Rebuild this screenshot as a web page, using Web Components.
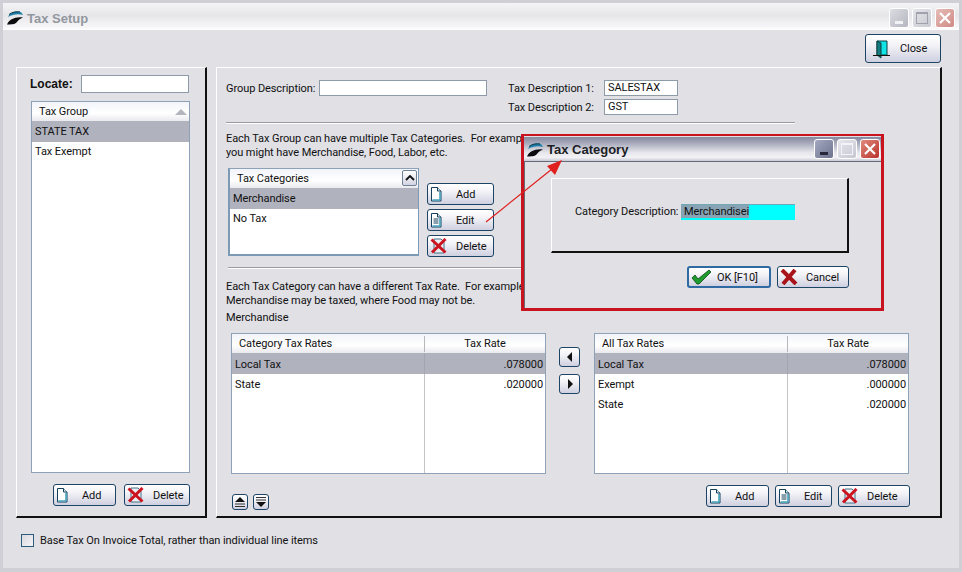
<!DOCTYPE html>
<html>
<head>
<meta charset="utf-8">
<title>Tax Setup</title>
<style>
  html, body { margin: 0; padding: 0; background: #e0e0e5; }
  body { font: 11px Roboto, "Liberation Sans", Arial, sans-serif; letter-spacing: -.08px; color: #111; }
</style>
</head>
<body>
<tax-setup-app></tax-setup-app>
<script>
// Small inline icons, keyed by name
const PAGE = `<path d="M1.500 1.500h6l3.500 3.500v10h-9.500z" fill="#fff" stroke="#14405c"/><path d="M7.500 1.500v3.500h3.500" fill="#d8eef4" stroke="#14405c"/><path d="M2.500 14h7.500M10 6v8" stroke="#45a3bd" stroke-width="1.600"/>`;
const ICONS = {
  add: `<svg width="13" height="16" viewBox="0 0 13 16">${PAGE}</svg>`,
  edit: `<svg width="13" height="16" viewBox="0 0 13 16">${PAGE}<path d="M3.500 7h5M3.500 9h5M3.500 11h5" stroke="#14405c"/></svg>`,
  del: `<svg width="18" height="16" viewBox="0 0 18 16"><path d="M4 1h7l3 3v11H4z" fill="#e8eef2" stroke="#49708a"/><path d="M1.500 1.500l14 13M15.500 1L2 14.500" stroke="#cc1420" stroke-width="3"/></svg>`,
  ok: `<svg width="22" height="16" viewBox="0 0 22 16"><path d="M1 9l3-3 3 4L18 1l2 2L8 15H6z" fill="#1f9a2e" stroke="#0a4a14" stroke-width=".8"/></svg>`,
  cancel: `<svg width="18" height="16" viewBox="0 0 18 16"><path d="M2 1l14 14M15 1L3 15" stroke="#a8141a" stroke-width="4"/></svg>`,
  door: `<svg width="20" height="20" viewBox="0 0 20 20"><path d="M5 2h10v14H5z" fill="#10e4e4" stroke="#0c3f44"/><path d="M5 2l4 2v15l-4-3z" fill="#157d80" stroke="#0c3f44"/><path d="M1 16.500h17" stroke="#111"/></svg>`,
  left: `<svg width="8" height="10" viewBox="0 0 8 10"><path d="M6 0v10L1 5z" fill="#111"/></svg>`,
  right: `<svg width="8" height="10" viewBox="0 0 8 10"><path d="M2 0v10l5-5z" fill="#111"/></svg>`,
  top: `<svg width="12" height="12" viewBox="0 0 12 12"><path d="M6 1l5 5H1z" fill="#111"/><path d="M1 8h10M1 10.500h10" stroke="#333"/></svg>`,
  bottom: `<svg width="12" height="12" viewBox="0 0 12 12"><path d="M1 1.500h10M1 4h10" stroke="#333"/><path d="M6 11l5-5H1z" fill="#111"/></svg>`
};

const LOGO = `<svg width="17" height="14" viewBox="0 0 17 14"><path d="M1 6C3 1 8 0 12 .5c2 .3 3 1.500 4 3.500C12 2.500 6 3 1 6z" fill="#1f7fa6"/><path d="M2 3.500C5 1 9 .5 13 1" fill="none" stroke="#0e3a50"/><path d="M0 13.500C2 8.500 8 5.500 16 6.500c-3 1-5 3-6 4.500-2 2.500-6 2.500-10 2.500z" fill="#0c0c10"/></svg>`;

class CaptionButtons extends HTMLElement {
  constructor() {
    super();
    this.attachShadow({ mode: 'open' });
    const active = this.hasAttribute('active');
    this.shadowRoot.innerHTML = `
      <style>
        :host { display: flex; gap: 3px; }
        span { width: 20px; height: 20px; box-sizing: border-box; border: 1px solid #fff; border-radius: 3px; display: flex; align-items: center; justify-content: center; }
        .min { background: ${active ? 'linear-gradient(135deg,#a4a8c0,#6d7290)' : 'linear-gradient(135deg,#dcdce2,#b4b5bf)'}; }
        .max { background: ${active ? 'linear-gradient(135deg,#e6e6ec,#c6c7d2)' : 'linear-gradient(135deg,#e4e4e9,#c9cad2)'}; }
        .close { background: ${active ? 'linear-gradient(135deg,#e08a7c,#b8332c)' : 'linear-gradient(135deg,#e6bdb8,#cf8a84)'}; }
        i { display: block; }
        .min i { width: 8px; height: 3px; margin-top: 9px; background: ${active ? '#26283a' : '#f2f2f4'}; }
        .max i { width: 10px; height: 9px; border: 1px solid ${active ? '#f4f4f8' : '#9fa1ad'}; border-top-width: 2px; }
      </style>
      <span class="min"><i></i></span>
      <span class="max"><i></i></span>
      <span class="close"><svg width="12" height="12" viewBox="0 0 12 12"><path d="M1 1l10 10M11 1L1 11" stroke="#fff" stroke-width="2.200"/></svg></span>
    `;
  }
}

class PushButton extends HTMLElement {
  constructor() {
    super();
    this.attachShadow({ mode: 'open' });
    const icon = ICONS[this.getAttribute('icon')] || '';
    this.shadowRoot.innerHTML = `
      <style>
        :host { display: inline-flex; box-sizing: border-box; height: 22px; align-items: center; border: 1px solid #1d4465; border-radius: 3px; background: linear-gradient(#ffffff 0, #f4f4f8 35%, #cfd0e0 100%); color: #111; }
        :host([primary]) { border: 2px solid #2f6aa3; }
        :host([only]) { justify-content: center; }
        .ic { display: flex; align-items: center; width: var(--label-x, 28px); padding-left: var(--icon-x, 2px); box-sizing: border-box; flex: none; }
        :host([only]) .ic { width: auto; padding: 0; }
      </style>
      <span class="ic">${icon}</span><slot></slot>
    `;
  }
}

class EdgePanel extends HTMLElement {
  constructor() {
    super();
    this.attachShadow({ mode: 'open' });
    this.shadowRoot.innerHTML = `
      <style>
        :host { display: block; box-sizing: border-box; border-top: 1px solid #fff; border-left: 1px solid #fff; border-right: 2px solid #111; border-bottom: 2px solid #111; }
      </style>
      <slot></slot>
    `;
  }
}

class TextField extends HTMLElement {
  constructor() {
    super();
    this.attachShadow({ mode: 'open' });
    this.shadowRoot.innerHTML = `
      <style>
        :host { display: block; box-sizing: border-box; height: 16px; background: #fff; border: 1px solid #8d9aa8; line-height: 14px; padding-left: 3px; white-space: nowrap; overflow: hidden; }
      </style>
      <slot></slot>
    `;
  }
}

class GridRow extends HTMLElement {
  constructor() {
    super();
    this.attachShadow({ mode: 'open' });
    const cells = (this.getAttribute('cells') || '').split('|');
    this.shadowRoot.innerHTML = `
      <style>
        :host { display: grid; grid-template-columns: var(--cols, 1fr); height: 20px; line-height: 20px; }
        :host([selected]) { background: #b0b2be; height: 21px; line-height: 21px; }
        span { padding: var(--row-pad, 0) 2px 0 3px; white-space: nowrap; overflow: hidden; }
        span + span { text-align: right; border-left: 1px solid #c4c4c8; }
        :host([selected]) span + span { border-left-color: #a3a5b0; }
      </style>
      ${cells.map(c => `<span>${c}</span>`).join('')}
    `;
  }
}

class DataGrid extends HTMLElement {
  constructor() {
    super();
    this.attachShadow({ mode: 'open' });
    const heads = (this.getAttribute('heads') || '').split('|');
    const cols = this.getAttribute('cols') || '1fr';
    const sort = this.getAttribute('sort');
    let mark = '';
    if (sort === 'tri') mark = `<svg class="mark" style="right:2px;top:7px" width="12" height="6" viewBox="0 0 12 6"><path d="M6 0l6 6H0z" fill="#b4b4bc"/></svg>`;
    if (sort === 'btn') mark = `<b class="mark btn"><svg width="10" height="6" viewBox="0 0 10 6"><path d="M1 5l4-4 4 4" fill="none" stroke="#111" stroke-width="1.800"/></svg></b>`;
    this.shadowRoot.innerHTML = `
      <style>
        :host { display: block; box-sizing: border-box; background: #fff; border: 1px solid #8da2b6; --cols: ${cols}; }
        :host([heavy]) { border-right-color: #7c9ab6; border-bottom: 2px solid #7c9ab6; border-left: 2px solid #7c9ab6; }
        .wrap { display: flex; flex-direction: column; height: 100%; background: linear-gradient(90deg, transparent calc(var(--split, 200%) - 1px), #c4c4c8 0, #c4c4c8 var(--split, 200%), transparent 0); }
        header { position: relative; display: grid; grid-template-columns: var(--cols); height: 19px; line-height: 20px; background: linear-gradient(#f2f4fa, #fff 60%, #e9e9ef); flex: none; }
        header span { padding-left: 7px; white-space: nowrap; }
        header span + span { padding-left: 0; text-align: center; border-left: 1px solid #b8b8bc; margin: 2px 0; line-height: 16px; }
        .mark { position: absolute; }
        .btn { right: 1px; top: 1px; width: 15px; height: 16px; display: flex; align-items: center; justify-content: center; box-sizing: border-box; border: 1px solid #6f8296; border-radius: 2px; background: linear-gradient(#fff, #d3d4e2); }
      </style>
      <div class="wrap" style="--split:${this.getAttribute('split') || '200%'}">
        <header>${heads.map(h => `<span>${h}</span>`).join('')}${mark}</header>
        <slot></slot>
      </div>
    `;
  }
}

class WinDialog extends HTMLElement {
  constructor() {
    super();
    this.attachShadow({ mode: 'open' });
    this.shadowRoot.innerHTML = `
      <style>
        /* Floats over the main window, with the red callout frame round it */
        :host { position: absolute; left: 518px; top: 131px; width: 363px; height: 177px; box-sizing: border-box; border: 3px solid #c8141e; border-top-width: 2px; background: #e0e0e5; display: flex; flex-direction: column; }
        .bar { height: 25px; margin-top: 1px; flex: none; box-sizing: border-box; display: flex; align-items: center; padding: 1px 1px 0 3px; border-bottom: 1px solid #666a78; background: linear-gradient(#85899f 0, #a6a9ba 25%, #e6e6ec 65%, #f2f2f6 85%, #c8c9d3 100%); }
        .logo { display: flex; margin-right: 3px; }
        .title { flex: 1; font: bold 13px "Liberation Sans", Arial, sans-serif; letter-spacing: 0; color: #1c1e26; }
        caption-buttons { margin-top: -1px; }
        .content { flex: 1; border-left: 1px solid #6a6a70; padding: 16px 32px 0 26px; }
        edge-panel { height: 75px; display: flex; align-items: center; padding: 0 0 7px 23px; }
        edge-panel > div { display: flex; align-items: center; }
        span.lbl { white-space: nowrap; width: 106px; }
        text-field { width: 114px; background: #00ffff; border: 0; border-top: 1px solid #6fa9b5; padding-left: 0; }
        mark { background: #88a4b4; color: #111; padding: 0 0 0 3px; }
        .foot { display: flex; justify-content: flex-end; gap: 6px; margin-top: 13px; }
      </style>
      <div class="bar">
        <span class="logo">${LOGO}</span>
        <span class="title">Tax Category</span>
        <caption-buttons active></caption-buttons>
      </div>
      <div class="content">
        <edge-panel><div><span class="lbl">Category Description:</span><text-field><mark>Merchandisei</mark></text-field></div></edge-panel>
        <div class="foot">
          <push-button primary icon="ok" style="width:84px">OK [F10]</push-button>
          <push-button icon="cancel" style="width:72px">Cancel</push-button>
        </div>
      </div>
    `;
  }
}

class TaxSetupApp extends HTMLElement {
  constructor() {
    super();
    this.attachShadow({ mode: 'open' });
    this.shadowRoot.innerHTML = `
      <style>
        :host { display: block; position: relative; width: 962px; height: 572px; overflow: hidden; box-sizing: border-box; background: #e0e0e5; border: 3px solid #cfcfd5; border-bottom-width: 4px; font: 11px Roboto, "Liberation Sans", Arial, sans-serif; letter-spacing: -.08px; color: #111; }
        .titlebar { height: 27px; box-sizing: border-box; display: flex; align-items: center; padding: 2px 4px 0 4px; background: linear-gradient(#f4f4f6, #e6e6ea 45%, #f7f7f9 90%, #fff); }
        .titlebar .logo { display: flex; margin-right: 3px; }
        .titlebar .title { flex: 1; padding-top: 1px; font: bold 13px "Liberation Sans", Arial, sans-serif; letter-spacing: 0; color: #92979f; }
        .body { padding: 4px 17px 0 13px; }
        .toolbar { display: flex; justify-content: flex-end; height: 29px; }
        .toolbar push-button { width: 76px; height: 29px; margin-right: 1px; --label-x: 34px; --icon-x: 6px; }
        .panels { display: flex; gap: 9px; margin-top: 4px; height: 451px; }

        .left { width: 191px; padding: 7px 0 0 13px; }
        .locate { display: flex; align-items: center; height: 18px; }
        .locate b { width: 51px; font: bold 12px "Liberation Sans", Arial, sans-serif; letter-spacing: 0; }
        .locate text-field { width: 108px; height: 18px; }
        .left data-grid { width: 159px; height: 372px; margin: 8px 0 0 1px; }
        .left .foot { display: flex; gap: 8px; margin: 11px 0 0 23px; }

        .right { flex: 1; padding: 12px 30px 0 9px; }
        .fields { display: grid; grid-template-columns: 93px 168px 21px 96px 74px; grid-auto-rows: 16px; row-gap: 3px; align-items: center; }
        .fields span { white-space: nowrap; }
        .fields .lbl2 { grid-column: 4; }
        .rule { width: 569px; height: 1px; background: #9b9ba0; border-bottom: 1px solid #fff; }
        .note { line-height: 14px; white-space: pre; }
        .cats { display: flex; gap: 8px; margin: 8px 0 0 2px; }
        .cats data-grid { width: 191px; height: 88px; }
        .cats .btns { display: flex; flex-direction: column; gap: 4px; margin-top: 15px; }
        .cats push-button { width: 67px; }
        .rates { display: flex; margin: 8px 0 0 5px; --row-pad: 1px; }
        .rates data-grid { width: 315px; height: 141px; }
        .arrows { display: flex; flex-direction: column; gap: 7px; margin: 14px 14px 0 13px; }
        .arrows push-button { width: 21px; height: 20px; }
        .bottom { display: flex; margin-top: 11px; }
        .moves { display: flex; gap: 5px; margin: 9px 0 0 6px; }
        .moves push-button { width: 16px; height: 16px; }
        .bottom .acts { display: flex; gap: 6px; margin-left: auto; }

        .check { display: flex; align-items: center; gap: 6px; margin: 15px 0 0 5px; }
        .check i { width: 13px; height: 13px; box-sizing: border-box; border: 1px solid #2b5c7e; background: linear-gradient(135deg, #d9d9df, #f5f5f7); }
        .check span { padding-top: 1px; }

        svg.marks { position: absolute; left: -3px; top: -3px; pointer-events: none; }
      </style>

      <div class="titlebar">
        <span class="logo">${LOGO}</span>
        <span class="title">Tax Setup</span>
        <caption-buttons></caption-buttons>
      </div>

      <div class="body">
        <div class="toolbar"><push-button icon="door">Close</push-button></div>

        <div class="panels">
          <edge-panel class="left">
            <div class="locate"><b>Locate:</b><text-field></text-field></div>
            <data-grid heads="Tax Group" sort="tri">
              <grid-row selected cells="STATE TAX"></grid-row>
              <grid-row cells="Tax Exempt"></grid-row>
            </data-grid>
            <div class="foot">
              <push-button icon="add" style="width:63px">Add</push-button>
              <push-button icon="del" style="width:66px">Delete</push-button>
            </div>
          </edge-panel>

          <edge-panel class="right">
            <div class="fields">
              <span>Group Description:</span><text-field></text-field><span></span>
              <span>Tax Description 1:</span><text-field>SALESTAX</text-field>
              <span class="lbl2">Tax Description 2:</span><text-field>GST</text-field>
            </div>
            <div class="rule" style="margin-top:7px"></div>
            <div class="note" style="margin-top:8px">Each Tax Group can have multiple Tax Categories.  For example
you might have Merchandise, Food, Labor, etc.</div>
            <div class="cats">
              <data-grid heavy heads="Tax Categories" sort="btn">
                <grid-row selected cells="Merchandise"></grid-row>
                <grid-row cells="No Tax"></grid-row>
              </data-grid>
              <div class="btns">
                <push-button icon="add">Add</push-button>
                <push-button icon="edit">Edit</push-button>
                <push-button icon="del">Delete</push-button>
              </div>
            </div>
            <div class="rule" style="margin:10px 0 0 2px"></div>
            <div class="note" style="margin-top:11px">Each Tax Category can have a different Tax Rate.  For example
Merchandise may be taxed, where Food may not be.</div>
            <div class="note" style="margin-top:3px">Merchandise</div>
            <div class="rates">
              <data-grid heads="Category Tax Rates|Tax Rate" cols="192px 1fr" split="193px">
                <grid-row selected cells="Local Tax|.078000"></grid-row>
                <grid-row cells="State|.020000"></grid-row>
              </data-grid>
              <div class="arrows">
                <push-button only icon="left"></push-button>
                <push-button only icon="right"></push-button>
              </div>
              <data-grid heads="All Tax Rates|Tax Rate" cols="192px 1fr" split="193px">
                <grid-row selected cells="Local Tax|.078000"></grid-row>
                <grid-row cells="Exempt|.000000"></grid-row>
                <grid-row cells="State|.020000"></grid-row>
              </data-grid>
            </div>
            <div class="bottom">
              <div class="moves">
                <push-button only icon="top"></push-button>
                <push-button only icon="bottom"></push-button>
              </div>
              <div class="acts">
                <push-button icon="add" style="width:63px">Add</push-button>
                <push-button icon="edit" style="width:57px">Edit</push-button>
                <push-button icon="del" style="width:72px">Delete</push-button>
              </div>
            </div>
          </edge-panel>
        </div>

        <div class="check"><i></i><span>Base Tax On Invoice Total, rather than individual line items</span></div>
      </div>

      <win-dialog></win-dialog>

      <!-- Red callout arrow, drawn over both windows -->
      <svg class="marks" width="962" height="572" viewBox="0 0 962 572">
        <path d="M486 222L552 169" stroke="#e0201e" stroke-width="1.200" fill="none"/>
        <path d="M562 160L547 166L555 175z" fill="#e0201e"/>
      </svg>
    `;
  }
}

// Children first, so they are ready when the parents render them
customElements.define('caption-buttons', CaptionButtons);
customElements.define('push-button', PushButton);
customElements.define('edge-panel', EdgePanel);
customElements.define('text-field', TextField);
customElements.define('grid-row', GridRow);
customElements.define('data-grid', DataGrid);
customElements.define('win-dialog', WinDialog);
customElements.define('tax-setup-app', TaxSetupApp);
</script>
</body>
</html>
